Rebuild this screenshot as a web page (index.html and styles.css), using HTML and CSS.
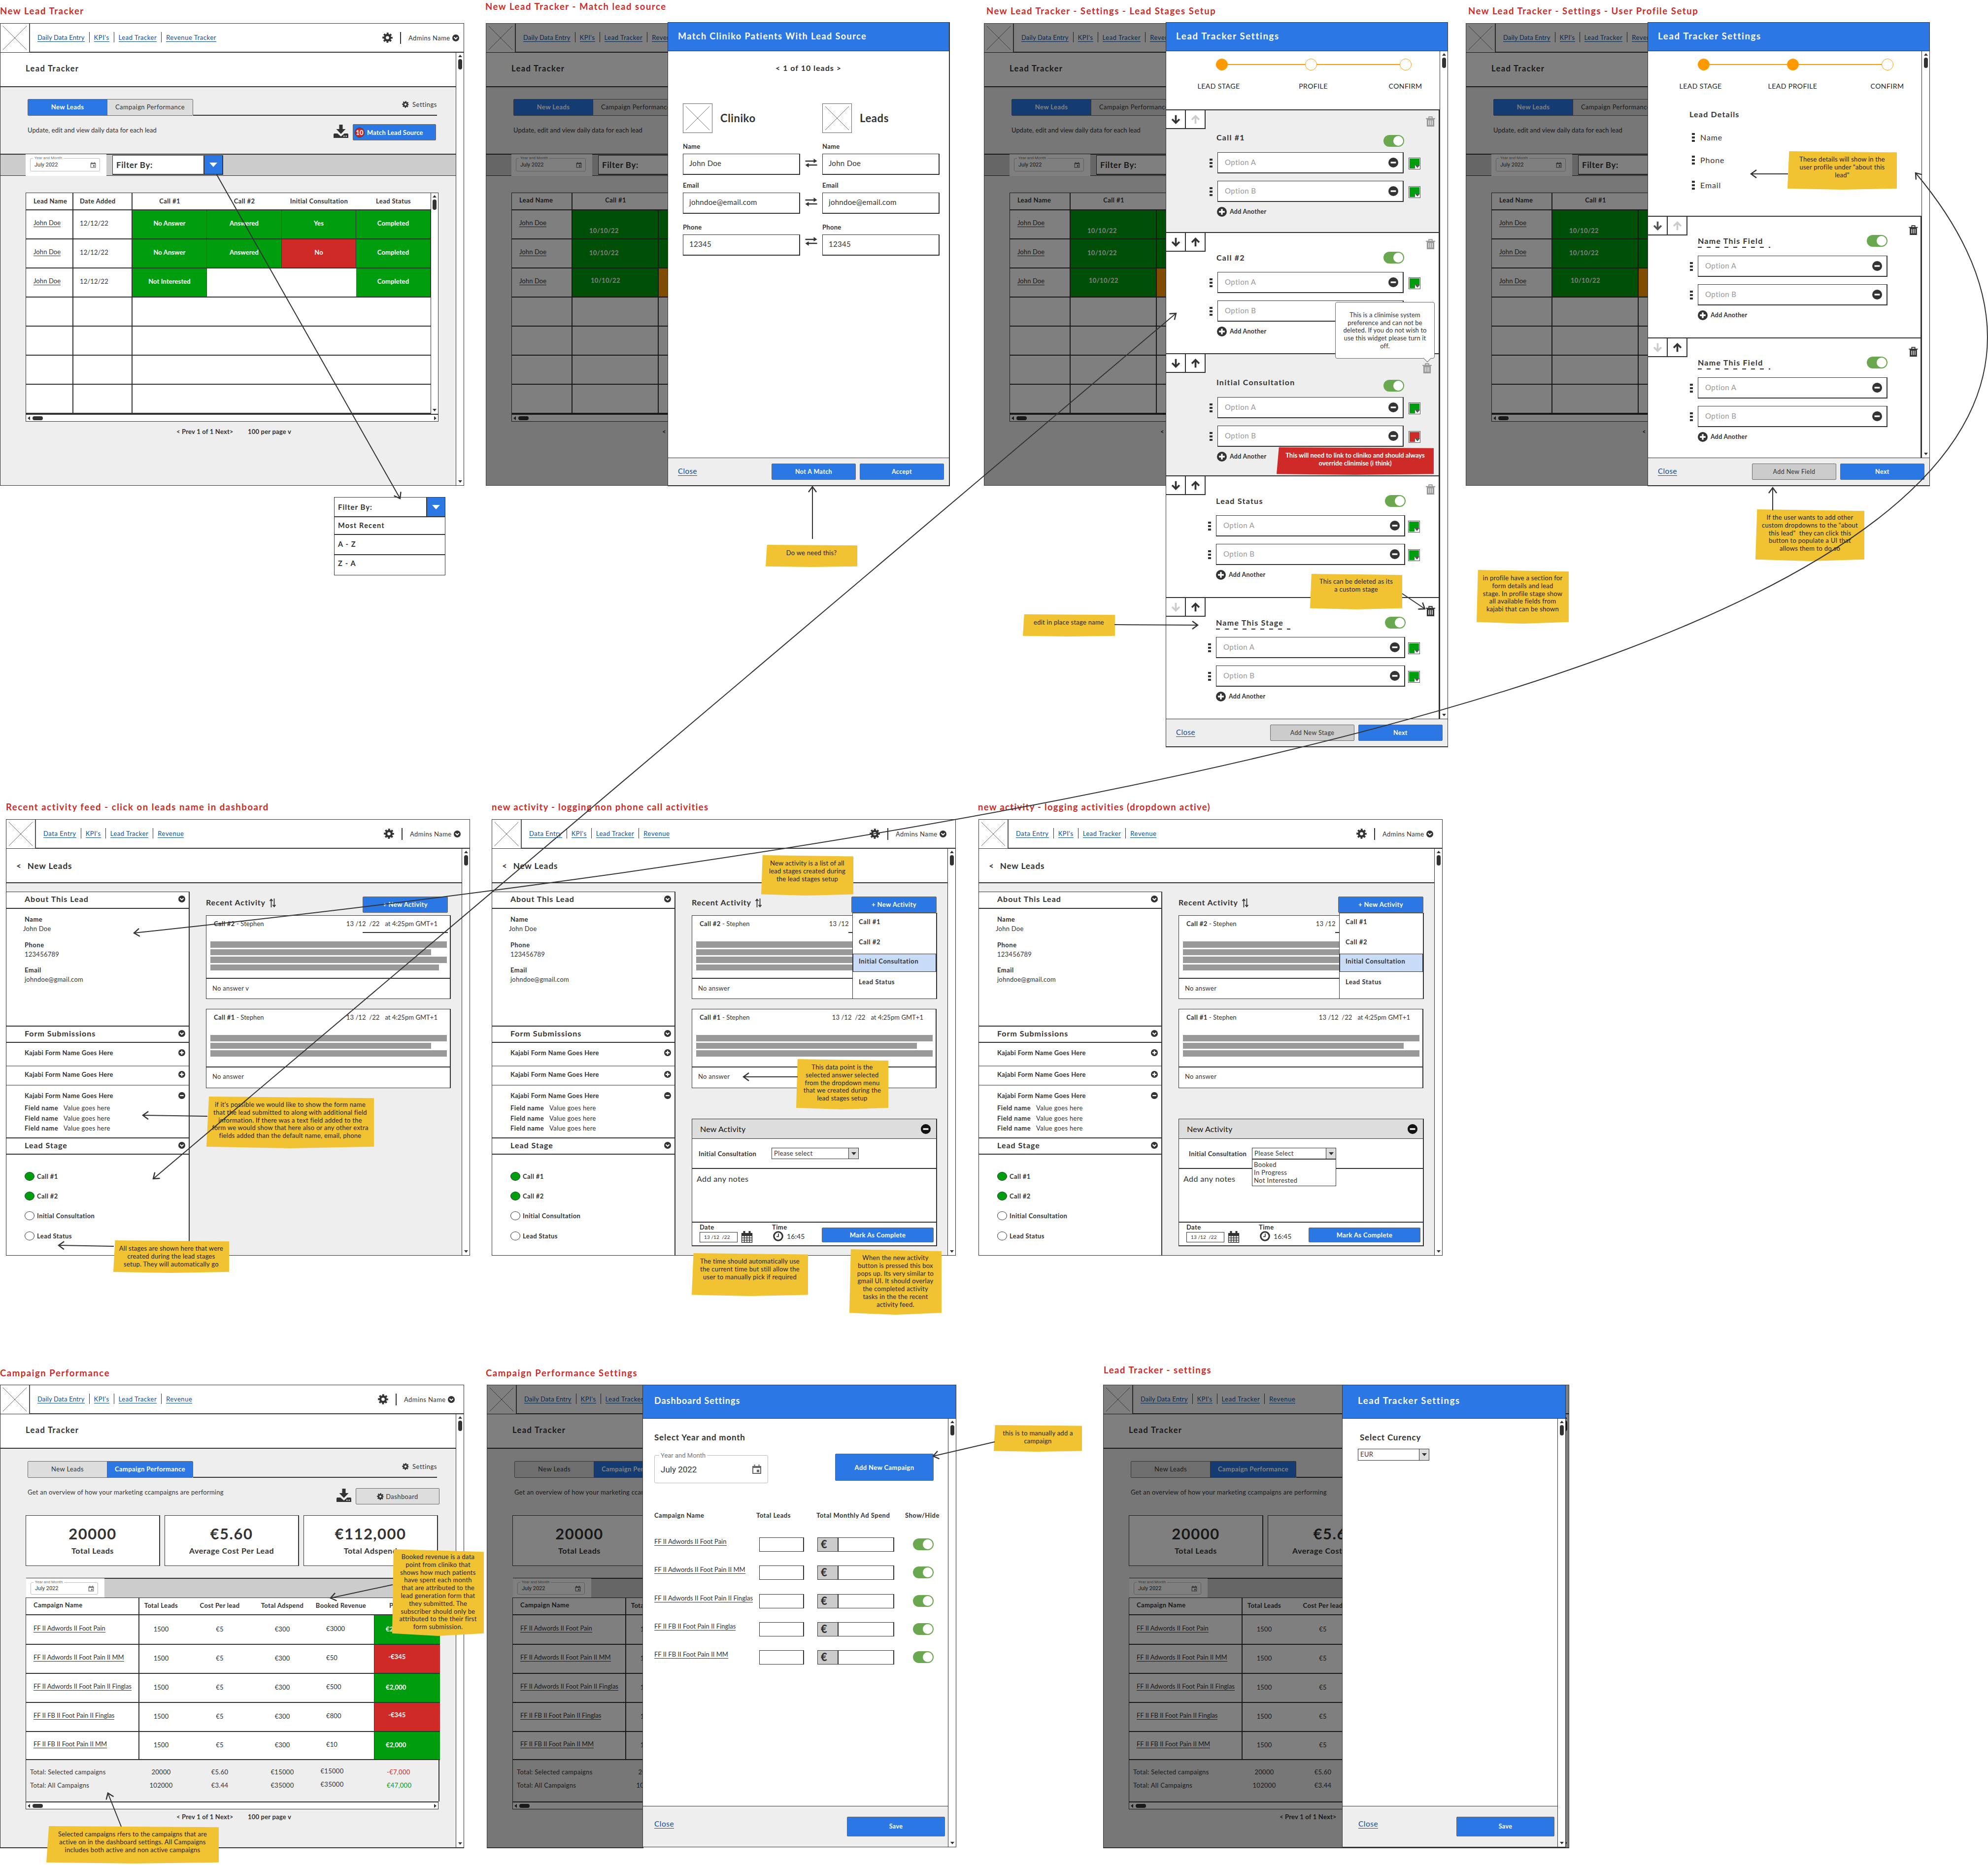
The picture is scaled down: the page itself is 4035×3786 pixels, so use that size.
FILE: index.html
```html
<!DOCTYPE html>
<html lang="en">
<head>
<meta charset="utf-8">
<title>Lead Tracker wireframes</title>
<link rel="stylesheet" href="styles.css">
</head>
<body>
<svg class="defs" aria-hidden="true">
  <symbol id="gear" viewBox="0 0 24 24"><circle cx="12" cy="12" r="6.3" fill="none" stroke="currentColor" stroke-width="5"/><circle cx="12" cy="12" r="9.7" fill="none" stroke="currentColor" stroke-width="4.2" stroke-dasharray="4.2 3.42" stroke-dashoffset="2.1"/></symbol>
  <symbol id="chev" viewBox="0 0 24 24"><circle cx="12" cy="12" r="12" fill="currentColor"/><path d="M6 9.5l6 6 6-6" fill="none" stroke="#fff" stroke-width="3.6"/></symbol>
  <symbol id="plus" viewBox="0 0 24 24"><circle cx="12" cy="12" r="12" fill="currentColor"/><path d="M12 5v14M5 12h14" stroke="#fff" stroke-width="4"/></symbol>
  <symbol id="minus" viewBox="0 0 24 24"><circle cx="12" cy="12" r="12" fill="currentColor"/><path d="M5.5 12h13" stroke="#fff" stroke-width="4"/></symbol>
  <symbol id="trash" viewBox="0 0 20 22"><path d="M6.5 4V1.2h7V4M0 5h20" fill="none" stroke="currentColor" stroke-width="2"/><path d="M2 5h16v17H2z" fill="currentColor"/><path d="M6.2 8.500v10M10 8.500v10M13.800 8.500v10" stroke="#eee" stroke-width="1.600"/></symbol>
  <symbol id="up" viewBox="0 0 24 24"><path d="M12 22V4M3.500 12.500L12 4l8.500 8.500" fill="none" stroke="currentColor" stroke-width="4.200"/></symbol>
  <symbol id="down" viewBox="0 0 24 24"><path d="M12 2v18M3.500 11.500L12 20l8.500-8.500" fill="none" stroke="currentColor" stroke-width="4.200"/></symbol>
  <symbol id="dots" viewBox="0 0 6 20"><path d="M0 1h6v4H0zM0 8h6v4H0zM0 15h6v4H0z" fill="currentColor"/></symbol>
  <symbol id="swap" viewBox="0 0 24 18"><path d="M0 5h20M24 13H4" stroke="currentColor" stroke-width="2.600"/><path d="M17 0l7 5-7 4zM7 9l-7 4 7 5z" fill="currentColor"/></symbol>
  <symbol id="download" viewBox="0 0 30 27"><path d="M11.500 0h7v9h6L15 19 5.500 9h6z" fill="currentColor"/><path d="M1 18h7l7 6 7-6h7l1 2v7H0v-7z" fill="currentColor"/><path d="M20 23.500h2.500M24.500 23.500H27" stroke="#eee" stroke-width="2"/></symbol>
  <symbol id="event" viewBox="0 0 20 20"><path d="M2 4h16v14H2z" fill="none" stroke="currentColor" stroke-width="2"/><path d="M2 3h16v4H2zM4.500 0h2v4h-2zM13.500 0h2v4h-2zM10 10.500h5v5h-5z" fill="currentColor"/></symbol>
  <symbol id="cal" viewBox="0 0 24 24"><path d="M1.500 5h21v18h-21zM1.500 9.500h21M1.500 14h21M1.500 18.500h21M6.700 9v14M12 9v14M17.300 9v14" fill="none" stroke="currentColor" stroke-width="1.400"/><path d="M1 4h22v5H1zM4.500 0h4v6h-4zM15.500 0h4v6h-4z" fill="currentColor"/></symbol>
  <symbol id="clock" viewBox="0 0 24 24"><circle cx="12" cy="12" r="10" fill="none" stroke="currentColor" stroke-width="3.600"/><path d="M12.500 6v7H8" fill="none" stroke="currentColor" stroke-width="2"/></symbol>
  <symbol id="sort" viewBox="0 0 13 18"><path d="M3.500 18V2M0.500 5l3-3.500 3 3.500M9.500 0v16M6.500 13l3 3.500 3-3.500" fill="none" stroke="currentColor" stroke-width="1.800"/></symbol>
  <symbol id="cross" viewBox="0 0 60 60" preserveAspectRatio="none"><path d="M5 5l50 50M55 5L5 55" stroke="#666" stroke-width="1"/></symbol>
</svg>

<template id="date-picker">
  <div class="picker"><div class="picker-box"><span class="picker-label">Year and Month</span><span>July 2022</span><svg class="i12"><use href="#event"/></svg></div></div>
</template>

<template id="user-menu">
  <svg class="i21"><use href="#gear"/></svg><i class="bar"></i><span>Admins Name</span><svg class="i14"><use href="#chev"/></svg>
</template>

<template id="leads-dimmed">
  <header class="top"><div class="logo"><svg><use href="#cross"/></svg></div>
    <nav><a class="daily">Daily Data Entry</a><a>KPI's</a><a>Lead Tracker</a><a>Revenue Tracker</a></nav></header>
  <div class="title-band">Lead Tracker</div>
  <div class="tools"><div class="tabs"><b class="on">New Leads</b><b>Campaign Performance</b></div></div>
  <div class="intro">Update, edit and view daily data for each lead</div>
  <div class="strip"><div data-part="date-picker"></div><div class="filter"><b>Filter By:</b></div></div>
  <div class="leads dim-grid">
    <div class="th name">Lead Name</div><div class="th mid">Call #1</div><div class="th"></div>
    <div class="name"><u>John Doe</u></div><div class="green low">10/10/22</div><div class="green"></div>
    <div class="name"><u>John Doe</u></div><div class="green even">10/10/22</div><div class="green"></div>
    <div class="name"><u>John Doe</u></div><div class="green third">10/10/22</div><div class="orange"></div>
    <div></div><div></div><div></div><div></div><div></div><div></div><div></div><div></div><div></div><div></div><div></div><div></div>
  </div>
  <div class="hscroll"><i></i></div>
  <div class="pager"><span>&lt; Prev 1 of 1 Next&gt;</span></div>
</template>

<template id="campaign">
  <header class="top"><div class="logo"><svg><use href="#cross"/></svg></div>
    <nav><a class="daily">Daily Data Entry</a><a>KPI's</a><a>Lead Tracker</a><a>Revenue</a></nav>
    <div class="user shift" data-part="user-menu"></div></header>
  <div class="pane"><main>
    <div class="title-band">Lead Tracker</div>
    <div class="tools"><div class="tabs"><b>New Leads</b><b class="on">Campaign Performance</b></div><div class="rule"><svg class="i14"><use href="#gear"/></svg><span>Settings</span></div></div>
    <div class="intro with-actions"><span>Get an overview of how your marketing ccampaigns are performing</span>
      <div class="actions"><svg class="dl"><use href="#download"/></svg><div class="btn grey"><svg class="i14"><use href="#gear"/></svg>Dashboard</div></div></div>
    <div class="stats"><div><strong>20000</strong><b>Total Leads</b></div><div><strong>€5.60</strong><b>Average Cost Per Lead</b></div><div><strong>€112,000</strong><b>Total Adspend</b></div></div>
    <div class="strip short"><div data-part="date-picker"></div></div>
    <div class="camp">
      <div class="th nm">Campaign Name</div><div class="th">Total Leads</div><div class="th">Cost Per lead</div><div class="th">Total Adspend</div><div class="th">Booked Revenue</div><div class="th pf">Profit</div>
      <div class="nm"><u>FF II Adwords II Foot Pain</u></div><div>1500</div><div>€5</div><div>€300</div><div class="bk">€3000</div><div class="pf green">€2,000</div>
      <div class="nm"><u>FF II Adwords II Foot Pain II MM</u></div><div>1500</div><div>€5</div><div>€300</div><div class="bk">€50</div><div class="pf red neg">-€345</div>
      <div class="nm"><u>FF II Adwords II Foot Pain II Finglas</u></div><div>1500</div><div>€5</div><div>€300</div><div class="bk">€500</div><div class="pf green">€2,000</div>
      <div class="nm"><u>FF II FB II Foot Pain II Finglas</u></div><div>1500</div><div>€5</div><div>€300</div><div class="bk">€800</div><div class="pf red neg">-€345</div>
      <div class="nm"><u>FF II FB II Foot Pain II MM</u></div><div>1500</div><div>€5</div><div>€300</div><div class="bk">€10</div><div class="pf green">€2,000</div>
    </div>
    <div class="totals">
      <div class="nm">Total: Selected campaigns</div><div>20000</div><div>€5.60</div><div>€15000</div><div>€15000</div><div class="loss">-€7,000</div>
      <div class="nm">Total: All Campaigns</div><div>102000</div><div>€3.44</div><div>€35000</div><div>€35000</div><div class="gain">€47,000</div>
    </div>
    <div class="hscroll"><i></i></div>
    <div class="pager"><span>&lt; Prev 1 of 1 Next&gt;</span><span>100 per page v</span></div>
  </main><aside class="vscroll"><i></i></aside></div>
</template>

<template id="activity">
  <header class="top"><div class="logo"><svg><use href="#cross"/></svg></div>
    <nav><a>Data Entry</a><a>KPI's</a><a>Lead Tracker</a><a>Revenue</a></nav>
    <div class="user shift" data-part="user-menu"></div></header>
  <div class="pane"><main>
    <div class="title-band back"><span>&lt;</span>New Leads</div>
    <div class="cols">
      <div class="lead-panel">
        <h3>About This Lead<svg class="i14"><use href="#chev"/></svg></h3>
        <dl><dt>Name</dt><dd class="first">John Doe</dd><dt>Phone</dt><dd>123456789</dd><dt>Email</dt><dd>johndoe@gmail.com</dd></dl>
        <h3>Form Submissions<svg class="i14"><use href="#chev"/></svg></h3>
        <div class="form-row f1">Kajabi Form Name Goes Here<svg class="i14"><use href="#plus"/></svg></div>
        <div class="form-row f2">Kajabi Form Name Goes Here<svg class="i14"><use href="#plus"/></svg></div>
        <div class="form-row f3">Kajabi Form Name Goes Here<svg class="i14"><use href="#minus"/></svg></div>
        <div class="fields"><p><b>Field name</b>Value goes here</p><p><b>Field name</b>Value goes here</p><p><b>Field name</b>Value goes here</p></div>
        <h3>Lead Stage<svg class="i14"><use href="#chev"/></svg></h3>
        <ul><li class="done">Call #1</li><li class="done">Call #2</li><li>Initial Consultation</li><li>Lead Status</li></ul>
      </div>
      <div class="feed">
        <div class="feed-head"><b>Recent Activity</b><svg class="sort"><use href="#sort"/></svg><div class="btn new">+ New Activity</div></div>
        <article><div class="meta"><span><b>Call #2</b> - Stephen</span><span class="day">13 /12<span class="covered">&nbsp; /22</span></span><span class="covered">at 4:25pm GMT+1</span></div><i class="stub"></i>
          <div class="lines"><i></i><i class="s1"></i><i></i><i class="s2"></i></div><footer>No answer<span class="only-first">&nbsp;v</span></footer></article>
        <article class="second"><div class="meta"><span><b>Call #1</b> - Stephen</span><span class="day">13 /12&nbsp; /22</span><span>at 4:25pm GMT+1</span></div>
          <div class="lines"><i></i><i class="s1"></i><i></i></div><footer>No answer</footer></article>
        <section class="composer">
          <div class="c-head">New Activity<svg class="i20"><use href="#minus"/></svg></div>
          <div class="c-pick"><b>Initial Consultation</b><div class="select"><span></span><i></i></div></div>
          <div class="c-notes">Add any notes</div>
          <div class="c-foot"><div class="c-date"><b>Date</b><div><span class="input">13 /12&nbsp; /22</span><svg class="cal"><use href="#cal"/></svg></div></div>
            <div class="c-time"><b>Time</b><div><svg class="i21"><use href="#clock"/></svg><span>16:45</span></div></div>
            <div class="btn done-btn">Mark As Complete</div></div>
        </section>
      </div>
    </div>
  </main><aside class="vscroll"><i></i></aside></div>
  <div class="menu"><b>Call #1</b><b>Call #2</b><b class="hot">Initial Consultation</b><b class="end">Lead Status</b></div>
</template>

<h2 class="t1">New Lead Tracker</h2>
<h2 class="t2">New Lead Tracker - Match lead source</h2>
<h2 class="t3">New Lead Tracker - Settings - Lead Stages Setup</h2>
<h2 class="t4">New Lead Tracker - Settings - User Profile Setup</h2>
<h2 class="t5">Recent activity feed - click on leads name in dashboard</h2>
<h2 class="t6">new activity - logging non phone call activities</h2>
<h2 class="t7">new activity - logging activities (dropdown active)</h2>
<h2 class="t8">Campaign Performance</h2>
<h2 class="t9">Campaign Performance Settings</h2>
<h2 class="t10">Lead Tracker - settings</h2>

<section class="board b1">
  <header class="top"><div class="logo"><svg><use href="#cross"/></svg></div>
    <nav><a class="daily">Daily Data Entry</a><a>KPI's</a><a>Lead Tracker</a><a>Revenue Tracker</a></nav>
    <div class="user" data-part="user-menu"></div></header>
  <div class="pane"><main>
    <div class="title-band">Lead Tracker</div>
    <div class="tools"><div class="tabs"><b class="on">New Leads</b><b>Campaign Performance</b></div><div class="rule"><svg class="i14"><use href="#gear"/></svg><span>Settings</span></div></div>
    <div class="intro with-actions"><span>Update, edit and view daily data for each lead</span>
      <div class="actions"><svg class="dl"><use href="#download"/></svg><div class="btn match"><em>10</em>Match Lead Source</div></div></div>
    <div class="strip"><div data-part="date-picker"></div><div class="filter"><b>Filter By:</b><i class="tri"></i></div></div>
    <div class="leads-wrap"><div class="leads full">
      <div class="th name">Lead Name</div><div class="th date">Date Added</div><div class="th">Call #1</div><div class="th">Call #2</div><div class="th">Initial Consultation</div><div class="th">Lead Status</div>
      <div class="name"><u>John Doe</u></div><div class="date">12/12/22</div><div class="green">No Answer</div><div class="green">Answered</div><div class="green">Yes</div><div class="green">Completed</div>
      <div class="name"><u>John Doe</u></div><div class="date">12/12/22</div><div class="green">No Answer</div><div class="green">Answered</div><div class="red">No</div><div class="green">Completed</div>
      <div class="name"><u>John Doe</u></div><div class="date">12/12/22</div><div class="green">Not Interested</div><div class="blank"></div><div class="blank"></div><div class="green">Completed</div>
      <div></div><div></div><div class="wide"></div><div></div><div></div><div class="wide"></div><div></div><div></div><div class="wide"></div><div></div><div></div><div class="wide"></div>
    </div><aside class="vscroll"><i></i></aside></div>
    <div class="hscroll"><i></i></div>
    <div class="pager"><span>&lt; Prev 1 of 1 Next&gt;</span><span>100 per page v</span></div>
  </main><aside class="vscroll"><i></i></aside></div>
</section>

<div class="filter-menu"><div class="filter"><b>Filter By:</b><i class="tri"></i></div><b>Most Recent</b><b>A - Z</b><b>Z - A</b></div>

<section class="board dim b2" data-part="leads-dimmed"></section>
<section class="drawer d2">
  <h1>Match Cliniko Patients With Lead Source</h1>
  <div class="match-body">
    <div class="count">&lt; 1 of 10 leads &gt;</div>
    <div class="match-grid">
      <div class="who"><div class="logo"><svg><use href="#cross"/></svg></div>Cliniko</div><span></span><div class="who"><div class="logo"><svg><use href="#cross"/></svg></div>Leads</div>
      <label>Name<span>John Doe</span></label><svg class="swap"><use href="#swap"/></svg><label>Name<span>John Doe</span></label>
      <label class="email">Email<span>johndoe@email.com</span></label><svg class="swap"><use href="#swap"/></svg><label class="email">Email<span>johndoe@email.com</span></label>
      <label>Phone<span>12345</span></label><svg class="swap last"><use href="#swap"/></svg><label>Phone<span>12345</span></label>
    </div>
  </div>
  <footer class="foot"><a>Close</a><div class="btn">Not A Match</div><div class="btn">Accept</div></footer>
</section>

<section class="board dim b3" data-part="leads-dimmed"></section>
<section class="drawer d3">
  <h1>Lead Tracker Settings</h1>
  <div class="pane"><div class="scroll-body">
    <div class="steps"><div class="on"><i></i><span>LEAD STAGE</span></div><div><i></i><span>PROFILE</span></div><div><i></i><span>CONFIRM</span></div></div>
    <div class="stage s1" data-name="Call #1" data-up="off" data-trash="off" data-colors="green green"></div>
    <div class="stage s2" data-name="Call #2" data-trash="off" data-colors="green green"></div>
    <div class="stage s3" data-name="Initial Consultation" data-trash="off" data-colors="green red"></div>
    <div class="stage s4" data-name="Lead Status" data-trash="off" data-colors="green green"></div>
    <div class="stage s5" data-name="Name This Stage" data-down="off" data-edit data-colors="green green"></div>
  </div><aside class="vscroll"><i></i></aside></div>
  <footer class="foot"><a>Close</a><div class="btn grey">Add New Stage</div><div class="btn">Next</div></footer>
</section>
<div class="tooltip">This is a clinimise system<br>preference and can not be<br>deleted. If you do not wish to<br>use this widget please turn it<br>off.</div>

<section class="board dim b4" data-part="leads-dimmed"></section>
<section class="drawer d4">
  <h1>Lead Tracker Settings</h1>
  <div class="pane"><div class="scroll-body">
    <div class="steps"><div class="on"><i></i><span>LEAD STAGE</span></div><div class="on"><i></i><span>LEAD PROFILE</span></div><div><i></i><span>CONFIRM</span></div></div>
    <div class="details"><b>Lead Details</b><p><svg class="dots"><use href="#dots"/></svg>Name</p><p><svg class="dots"><use href="#dots"/></svg>Phone</p><p class="last"><svg class="dots"><use href="#dots"/></svg>Email</p></div>
    <div class="stage p1" data-name="Name This Field" data-down="soft" data-up="off" data-edit></div>
    <div class="stage p2" data-name="Name This Field" data-down="off" data-edit></div>
  </div><aside class="vscroll"><i></i></aside></div>
  <footer class="foot"><a>Close</a><div class="btn grey">Add New Field</div><div class="btn">Next</div></footer>
</section>

<section class="board b5" data-part="activity"></section>
<section class="board b6 composing" data-part="activity" data-select="Please select"></section>
<section class="board b7 composing" data-part="activity" data-select="Please Select"></section>
<div class="options"><span>Booked</span><span>In Progress</span><span>Not Interested</span></div>

<section class="board b8" data-part="campaign"></section>
<section class="board dim b9" data-part="campaign"></section>
<section class="drawer d9">
  <h1>Dashboard Settings</h1>
  <div class="pane"><div class="dash">
    <div class="dash-top"><div><b>Select Year and month</b><div class="picker-box big"><span class="picker-label">Year and Month</span><span>July 2022</span><svg class="i20"><use href="#event"/></svg></div></div><div class="btn add">Add New Campaign</div></div>
    <div class="dash-grid">
      <b>Campaign Name</b><b>Total Leads</b><b>Total Monthly Ad Spend</b><b>Show/Hide</b>
      <u>FF II Adwords II Foot Pain</u><i class="box"></i><div class="money"><span>€</span></div><i class="toggle"></i>
      <u>FF II Adwords II Foot Pain II MM</u><i class="box"></i><div class="money"><span>€</span></div><i class="toggle"></i>
      <u>FF II Adwords II Foot Pain II Finglas</u><i class="box"></i><div class="money"><span>€</span></div><i class="toggle"></i>
      <u>FF II FB II Foot Pain II Finglas</u><i class="box"></i><div class="money"><span>€</span></div><i class="toggle"></i>
      <u>FF II FB II Foot Pain II MM</u><i class="box"></i><div class="money"><span>€</span></div><i class="toggle"></i>
    </div>
    <footer class="foot tall"><a>Close</a><div class="btn">Save</div></footer>
  </div><aside class="vscroll"><i></i></aside></div>
</section>
<section class="board dim b10" data-part="campaign"></section>
<section class="drawer d10">
  <h1>Lead Tracker Settings</h1>
  <div class="pane"><div class="dash">
    <div class="currency"><b>Select Curency</b><div class="select"><span>EUR</span><i></i></div></div>
    <footer class="foot tall"><a>Close</a><div class="btn">Save</div></footer>
  </div><aside class="vscroll"><i></i></aside></div>
</section>

<div class="note n1">Do we need this?</div>
<div class="note n2 danger">This will need to link to cliniko and should always<br>override clinimise (i think)</div>
<div class="note n3">This can be deleted as its<br>a custom stage</div>
<div class="note n4">edit in place stage name</div>
<div class="note n5">These details will show in the<br>user profile under "about this<br>lead"</div>
<div class="note n6">If the user wants to add other<br>custom dropdowns to the "about<br>this lead"&nbsp; they can click this<br>button to populate a UI that<br>allows them to do so</div>
<div class="note n7">in profile have a section for<br>form details and lead<br>stage. In profile stage show<br>all available fields from<br>kajabi that can be shown</div>
<div class="note n8">if it's possible we would like to show the form name<br>that the lead submitted to along with additional field<br>information. If there was a text field added to the<br>form we would show that here also or any other extra<br>fields added than the default name, email, phone</div>
<div class="note n9">All stages are shown here that were<br>created during the lead stages<br>setup. They will automatically go</div>
<div class="note n10">New activity is a list of all<br>lead stages created during<br>the lead stages setup</div>
<div class="note n11">This data point is the<br>selected answer selected<br>from the dropdown menu<br>that we created during the<br>lead stages setup</div>
<div class="note n12">The time should automatically use<br>the current time but still allow the<br>user to manually pick if required</div>
<div class="note n13">When the new activity<br>button is pressed this box<br>pops up. Its very similar to<br>gmail UI. It should overlay<br>the completed activity<br>tasks in the the recent<br>activity feed.</div>
<div class="note n14">Booked revenue is a data<br>point from cliniko that<br>shows how much patients<br>have spent each month<br>that are attributed to the<br>lead generation form that<br>they submitted. The<br>subscriber should only be<br>attributed to the their first<br>form submission.</div>
<div class="note n15">Selected campaigns rfers to the campaigns that are<br>active on in the dashboard settings. All Campaigns<br>includes both active and non active campaigns</div>
<div class="note n16">this is to manually add a<br>campaign</div>

<svg class="arrows" viewBox="0 0 4035 3786" fill="none" stroke="#333" stroke-width="2">
  <defs>
    <marker id="head" markerUnits="userSpaceOnUse" markerWidth="30" markerHeight="30" refX="15" refY="15" viewBox="0 0 30 30" orient="auto"><path d="M4 7L15 15 4 23" fill="none" stroke="#333" stroke-width="2.400"/></marker>
    <marker id="tail" markerUnits="userSpaceOnUse" markerWidth="30" markerHeight="30" refX="15" refY="15" viewBox="0 0 30 30" orient="auto"><path d="M26 7L15 15 26 23" fill="none" stroke="#333" stroke-width="2.400"/></marker>
  </defs>
  <path d="M439 353L812 1012" marker-end="url(#head)"/>
  <path d="M1649 1094V988" marker-end="url(#head)"/>
  <path d="M2262 1268L2431 1269" marker-end="url(#head)"/>
  <path d="M2846 1205L2892 1236" marker-end="url(#head)"/>
  <path d="M3629 353H3554" marker-end="url(#head)"/>
  <path d="M3598 1036V990" marker-end="url(#head)"/>
  <path d="M421 2266L290 2264" marker-end="url(#head)"/>
  <path d="M231 2530L119 2528" marker-end="url(#head)"/>
  <path d="M1619 2186H1509" marker-end="url(#head)"/>
  <path d="M797 3217L671 3244" marker-end="url(#head)"/>
  <path d="M246 3708L219 3640" marker-end="url(#head)"/>
  <path d="M2019 2927L1894 2956" marker-end="url(#head)"/>
  <path d="M311 2393L2387 636" marker-start="url(#tail)" marker-end="url(#head)"/>
  <path d="M272 1894Q4775 1412 3888 351" marker-start="url(#tail)" marker-end="url(#head)"/>
</svg>
<script src="script.js"></script>
</body>
</html>
```
FILE: script.js
```js
// Fill every element that names a part with a copy of that template.
function fill(root) {
  root.querySelectorAll('[data-part]').forEach(function (el) {
    if (!el.dataset.part) return;
    el.prepend(document.getElementById(el.dataset.part).content.cloneNode(true));
    el.removeAttribute('data-part');
    fill(el);
  });
}
fill(document);

document.querySelectorAll('[data-select]').forEach(function (el) {
  el.querySelector('.select span').textContent = el.dataset.select;
});

function icon(name, cls) {
  return '<svg class="' + cls + '"><use href="#' + name + '"/></svg>';
}

// A stage card: order buttons, title with toggle, two options, add link.
document.querySelectorAll('.stage').forEach(function (el) {
  var d = el.dataset;
  var colors = d.colors ? d.colors.split(' ') : [];
  var options = ['Option A', 'Option B'].map(function (label, n) {
    return '<div class="option">' + icon('dots', 'dots') +
      '<div class="field">' + label + icon('minus', 'i20') + '</div>' +
      (colors[n] ? '<i class="swatch ' + colors[n] + '"></i>' : '') + '</div>';
  }).join('');
  el.innerHTML =
    '<div class="order"><span class="' + (d.down || '') + '">' + icon('down', 'i21') + '</span>' +
    '<span class="' + (d.up || '') + '">' + icon('up', 'i21') + '</span>' +
    icon('trash', 'trash ' + (d.trash || '')) + '</div>' +
    '<div class="stage-title"><b' + ('edit' in d ? ' class="edit"' : '') + '>' + d.name + '</b><i class="toggle"></i></div>' +
    options +
    '<div class="another">' + icon('plus', 'i20') + 'Add Another</div>';
});
```
FILE: styles.css
```css
* { box-sizing: border-box; }
body { margin: 0; position: relative; width: 4035px; height: 3786px; overflow: hidden; background: #fff; color: #333; font: 13px/16px Lato, "Liberation Sans", sans-serif; letter-spacing: .1px; white-space: nowrap; }
h1, h2, h3, p, dl, dd, ul { margin: 0; padding: 0; }
svg { display: block; flex: none; }
.defs { position: absolute; width: 0; height: 0; }
.i12 { width: 12px; height: 12px; }
.i14 { width: 14px; height: 14px; }
.i20 { width: 20px; height: 20px; }
.i21 { width: 21px; height: 21px; }
.arrows { position: absolute; left: 0; top: 0; width: 4035px; height: 3786px; }
b, strong { font-weight: 700; letter-spacing: .4px; }
u { text-decoration: none; border-bottom: 1px solid #333; line-height: 15px; }
a { color: #0b4f9e; border-bottom: 1px solid #0b4f9e; line-height: 16px; }

/* canvas placement */
h2 { position: absolute; color: #cf2a27; font: 700 18.500px/24px Lato, sans-serif; letter-spacing: 1.550px; }
.t1 { left: 0; top: 10px; } .t2 { left: 985px; top: 1px; } .t3 { left: 2002px; top: 10px; } .t4 { left: 2980px; top: 10px; }
.t5 { left: 12px; top: 1626px; } .t6 { left: 998px; top: 1626px; } .t7 { left: 1985px; top: 1626px; }
.t8 { left: 0; top: 2775px; } .t9 { left: 986px; top: 2775px; } .t10 { left: 2240px; top: 2769px; }
.t6, .t7 { letter-spacing: 1.300px; }
.board { position: absolute; width: 942px; height: 939px; background: #eee; border: 1px solid #333; overflow: hidden; display: flex; flex-direction: column; }
.b1 { left: 0; top: 47px; } .b2 { left: 986px; top: 47px; width: 372px; } .b3 { left: 1997px; top: 47px; width: 372px; } .b4 { left: 2975px; top: 47px; width: 372px; }
.b5, .b6, .b7 { top: 1663px; height: 886px; } .b5 { left: 12px; } .b6 { left: 998px; } .b7 { left: 1986px; }
.b8, .b9, .b10 { top: 2811px; height: 941px; border-bottom-width: 2px; } .b8 { left: 0; } .b9 { left: 988px; width: 318px; } .b10 { left: 2239px; width: 946px; }
.b9 .pane { width: 940px; }
.dim::after { content: ""; position: absolute; inset: 0; background: rgba(0,0,0,.5); }
.drawer { position: absolute; background: #fff; border: 1px solid #333; display: flex; flex-direction: column; }
.d2 { left: 1355px; top: 45px; width: 573px; height: 942px; border-width: 1px 2px 2px 1px; }
.d3 { left: 2366px; top: 45px; width: 573px; height: 1472px; border-width: 1px 1px 2px 1px; }
.d4 { left: 3344px; top: 45px; width: 573px; height: 942px; border-bottom-width: 2px; }
.d9 { left: 1304px; top: 2811px; width: 637px; height: 939px; }
.d10 { left: 2724px; top: 2811px; width: 454px; height: 939px; }

/* app frame */
.top { height: 59px; flex: none; background: #fff; border-bottom: 2px solid #333; display: flex; align-items: center; }
.logo { width: 60px; height: 58px; flex: none; border: 1px solid #555; border-width: 0 2px 0 0; background: #fff; }
.logo svg { width: 100%; height: 100%; }
nav { display: flex; align-items: center; margin-left: 15px; }
nav a { margin-right: 9px; letter-spacing: .55px; }
nav .daily { letter-spacing: .15px; }
nav a + a { position: relative; margin-left: 10px; }
nav a + a::before { content: ""; position: absolute; left: -10px; top: -3px; height: 21px; border-left: 1px solid #333; }
.user { display: flex; align-items: center; margin-left: auto; padding-right: 9px; }
.user.shift { padding-right: 18px; }
.user .bar { width: 2px; height: 24px; background: #333; margin: 0 15px 0 15px; }
.user span { margin-right: 8px; width: 81px; letter-spacing: .45px; }
.pane { display: flex; flex: 1; min-height: 0; }
main { flex: 1; min-width: 0; display: flex; flex-direction: column; }
.vscroll { width: 16px; flex: none; background: #fff; border-left: 1px solid #333; display: flex; flex-direction: column; align-items: center; justify-content: space-between; }
.vscroll::before { content: ""; border: 4px solid transparent; border-bottom: 5px solid #333; border-top: 0; margin-top: 4px; }
.vscroll::after { content: ""; border: 4px solid transparent; border-top: 5px solid #333; border-bottom: 0; margin-bottom: 5px; }
.vscroll i { width: 8px; height: 21px; border-radius: 4px; background: #333; margin: 4px 0 auto; }
.hscroll { height: 16px; margin-left: 51px; width: 838px; background: #fff; border: 1px solid #333; border-top-width: 2px; display: flex; align-items: center; justify-content: space-between; flex: none; }
.hscroll::before { content: ""; border: 4px solid transparent; border-right: 5px solid #333; border-left: 0; margin-left: 3px; }
.hscroll::after { content: ""; border: 4px solid transparent; border-left: 5px solid #333; border-right: 0; margin-right: 3px; }
.hscroll i { width: 21px; height: 8px; border-radius: 4px; background: #333; margin: 0 auto 0 5px; }
.title-band { height: 70px; flex: none; background: #fff; border-bottom: 2px solid #333; padding: 21px 0 0 51px; font: 700 16.500px/22px Lato, sans-serif; letter-spacing: 1.350px; }
.title-band.back { padding-left: 20px; padding-top: 24px; font-size: 17px; letter-spacing: .9px; }
.title-band.back span { margin-right: 12px; }
.tools { display: flex; margin: 24px 0 0 55px; width: 831px; flex: none; }
.tabs { display: flex; height: 34px; border: 1px solid #666; border-radius: 2px; }
.tabs b { width: 160px; background: #ddd; text-align: center; line-height: 30px; font-weight: 400; letter-spacing: .4px; }
.tabs b + b { width: 174px; border-left: 1px solid #666; }
.tabs .on { background: #2b78e4; color: #fff; font-weight: 700; }
.rule { flex: 1; border-bottom: 2px solid #333; display: flex; justify-content: flex-end; gap: 7px; padding-top: 3px; }
.rule svg { margin-top: 1px; } .rule span { letter-spacing: .5px; }
.intro { margin: 17px 0 0 55px; height: 34px; padding-top: 4px; flex: none; letter-spacing: .08px; }
.with-actions { display: flex; justify-content: space-between; width: 829px; }
.with-actions .actions { display: flex; margin-top: -4px; gap: 9px; }
.b8 .with-actions, .b9 .with-actions, .b10 .with-actions { width: 836px; letter-spacing: .26px; }
.b8 .actions { margin-top: 0; }
.dl { width: 30px; height: 27px; margin-top: 1px; }
.btn { height: 33px; background: #2b78e4; border: 1px solid #666; border-radius: 2px; color: #fff; font-weight: 700; letter-spacing: .4px; display: flex; align-items: center; justify-content: center; }
.btn.grey { background: #ddd; color: #333; font-weight: 400; width: 170px; gap: 4px; }
.btn.match { width: 169px; justify-content: flex-start; padding-left: 3px; gap: 5px; letter-spacing: .2px; }
.match em { width: 20px; height: 20px; border-radius: 50%; background: #cf2a27; border: 1px solid #333; font-style: normal; line-height: 18px; text-align: center; }
.strip { height: 45px; flex: none; margin-top: 26px; padding-left: 51px; background: #ccc; border: 1px solid #333; border-width: 2px 0 1px; display: flex; align-items: center; }
.picker { width: 164px; height: 44px; background: #fff; padding: 8px 0 0 9px; }
.picker-box { position: relative; width: 142px; height: 27px; border: 1px solid #bbb; border-radius: 3px; display: flex; align-items: center; justify-content: space-between; padding: 0 7px 0 8px; font: 11px/14px Roboto, sans-serif; letter-spacing: 0; }
.picker-box svg { color: #666; }
.picker-label { position: absolute; left: 5px; top: -6px; padding: 0 3px; background: #fff; color: #777; font: 8px/10px Roboto, sans-serif; }
.filter { width: 225px; height: 40px; margin-left: 12px; background: #fff; border: 1px solid #333; border-width: 1px 2px 2px 1px; display: flex; align-items: center; justify-content: space-between; padding-left: 7px; }
.filter b { font-size: 17px; letter-spacing: .6px; }
.filter .tri { width: 38px; align-self: stretch; background: #2b78e4; border-left: 2px solid #333; display: flex; align-items: center; justify-content: center; }
.tri::before { content: ""; border: 8px solid transparent; border-top: 9px solid #fff; border-bottom: 0; }

/* leads table */
.leads-wrap { display: flex; margin: 34px 0 0 51px; width: 838px; flex: none; border: 1px solid #333; border-width: 1px 2px 0 1px; background: #fff; }
.leads-wrap .vscroll { width: 15px; margin-left: auto; }
.leads { display: grid; background: #fff; }
.leads > div { border: 0 solid #333; border-width: 0 2px 2px 0; padding-bottom: 5px; display: flex; align-items: center; justify-content: center; }
.full { grid-template: 35px repeat(7, 59px) / 96px 120px 151px 152px 151px 151px; }
.full > .wide { grid-column: 3 / 7; border-right: 0; }
.full > .green, .full > .red { font-weight: 700; color: #fff; border-width: 0 1px 2px 0; letter-spacing: .1px; }
.full > .blank { border-right-width: 0; }
.full > .th { border-right-width: 0; padding-bottom: 2px; }
.full > .name.th, .full > .date.th { border-right-width: 2px; }
.leads > .th { font-weight: 700; letter-spacing: .4px; }
.leads > .name { justify-content: flex-start; padding-left: 15px; }
.leads > .date { justify-content: flex-start; padding-left: 13px; }
.green { background: #009e0f; color: #fff; }
.red { background: #cf2a27; color: #fff; }
.orange { background: #ff9900; }
.dim-grid { margin: 34px 0 0 51px; grid-template: 35px repeat(7, 59px) / 123px 175px 90px; border: 1px solid #333; border-width: 1px 0 0 1px; flex: none; }
.dim-grid > .green { font-weight: 700; justify-content: flex-start; padding-left: 34px; letter-spacing: .3px; color: #fff; }
.dim-grid > .low { align-items: flex-end; padding-bottom: 8px; }
.dim-grid > .even { padding-bottom: 3px; } .dim-grid > .third { padding-left: 37px; padding-bottom: 9px; }
.dim-grid > .th.mid { border-right: 0; }
.pager { display: flex; gap: 28px; margin: 12px 0 0 357px; font-weight: 700; letter-spacing: .2px; }
.pager span { width: 117px; }

.filter-menu { position: absolute; left: 678px; top: 1009px; width: 226px; height: 159px; border: 1px solid #333; background: #fff; display: grid; grid-template-rows: 40px 36px 41px 40px; }
.filter-menu .filter { margin: 0; width: 224px; border-width: 0 0 2px; }
.filter-menu .filter b { font-size: 15px; letter-spacing: 1px; }
.filter-menu > b { padding-left: 7px; font-size: 14.500px; line-height: 34px; letter-spacing: 1.200px; border-bottom: 2px solid #333; }
.filter-menu > b:nth-child(3) { line-height: 38px; }
.filter-menu > b:last-child { border: 0; }

/* drawers */
h1 { height: 58px; flex: none; background: #2b78e4; color: #fff; border-bottom: 1px solid #333; font: 700 18.500px/54px Lato, sans-serif; letter-spacing: 1.700px; padding-left: 20px; }
.d2 h1 { font-size: 18px; letter-spacing: 1.450px; }
.foot { height: 56px; flex: none; background: #eee; border-top: 1px solid #333; padding: 11px 10px 0 20px; display: flex; gap: 8px; }
.foot a { align-self: flex-start; margin: 7px auto 0 0; font-size: 15px; line-height: 17px; letter-spacing: .5px; }
.foot .btn { width: 171px; font-size: 12.500px; }
.foot .grey { background: #ccc; }
.match-body { flex: 1; padding: 23px 0 0 30px; }
.count { width: 510px; text-align: center; font: 700 16px/22px Lato, sans-serif; letter-spacing: 1px; }
.match-grid { margin-top: 60px; display: grid; grid-template-columns: 238px 25px 238px; column-gap: 10px; }
.who { display: flex; align-items: center; gap: 16px; font: 700 22px/26px Lato, sans-serif; letter-spacing: .6px; padding-top: 1px; }
.who .logo { border: 1px solid #666; height: 60px; }
.match-grid label { margin-top: 19px; font-weight: 700; font-size: 13px; letter-spacing: .3px; display: grid; gap: 7px; }
.match-grid .email { margin-top: 13px; }
.match-grid label span { height: 43px; border: 1px solid #333; border-width: 1px 2px 2px 1px; line-height: 37px; padding-left: 12px; font-size: 15px; font-weight: 400; letter-spacing: .3px; }
.swap { width: 25px; height: 18px; align-self: end; margin-bottom: 15px; }
.swap.last { margin-bottom: 20px; }

.scroll-body { flex: 1; min-width: 0; display: flex; flex-direction: column; }
.steps { display: grid; grid-template-columns: 181px 181px 203px; padding: 15px 0 0 22px; height: 118px; flex: none; font-size: 14px; color: #222; margin-right: -24px; }
.steps div { display: grid; justify-items: center; align-content: start; gap: 24px; position: relative; letter-spacing: .45px; }
.steps i { width: 24px; height: 24px; border-radius: 50%; border: 1.500px solid #f90; background: #fff; }
.steps .on i { background: #f90; }
.steps div:first-child span { margin-right: 12px; }
.d3 .steps div:nth-child(2) span { margin-left: 10px; }
.steps div + div::before { content: ""; position: absolute; right: calc(50% + 12px); width: 157px; top: 11px; height: 2px; background: #f90; }
.steps div:last-child::before { width: 168px; }
.stage { border: 2px solid #333; border-width: 2px 2px 0 0; display: flex; flex-direction: column; flex: none; }
.s1 { height: 249px; } .s2 { height: 246px; } .s3 { height: 248px; } .s4 { height: 247px; } .s5 { height: 247px; }
.s1, .s3 { background: #eee; }
.order { display: flex; height: 38px; }
.order span { width: 40px; height: 38px; background: #fff; border: 1px solid #333; border-width: 0 2px 2px 0; display: flex; align-items: center; justify-content: center; }
.order .off { color: #ccc; } .order .soft { color: #555; }
.trash { width: 19px; height: 21px; margin: 12px 7px 0 auto; }
.trash.off { color: #999; }
.s3 .trash { margin: 18px 14px 0 auto; } .s4 .trash, .s5 .trash { margin-top: 16px; }
.stage-title { display: flex; justify-content: space-between; align-items: flex-start; width: 381px; margin-left: 102px; height: 40px; }
.stage-title b { font-size: 16px; line-height: 22px; letter-spacing: 1.250px; }
.stage-title .edit { background: repeating-linear-gradient(90deg, #333 0 8px, transparent 8px 18px) left bottom / 100% 2px no-repeat; padding: 0 14px 3px 0; }
.toggle { width: 42px; height: 24px; border-radius: 12px; background: #6aa84f; padding: 2px; display: flex; justify-content: flex-end; margin-top: -1px; }
.toggle::after { content: ""; width: 20px; height: 20px; border-radius: 50%; background: #fff; }
.s1 .stage-title { margin-top: 13px; height: 34px; } .s2 .stage-title { margin-top: 1px; } .s3 .stage-title { margin-top: 15px; height: 34px; }
.s1 .stage-title b, .s3 .stage-title b { margin-top: -7px; }
.s4 .stage-title, .s5 .stage-title { margin: 1px 0 0 101px; width: 385px; }
.option { display: flex; align-items: center; height: 43px; margin: 0 0 15px 88px; }
.dots { width: 6px; height: 20px; }
.field { width: 378px; height: 43px; margin-left: 10px; background: #fff; border: 1px solid #333; border-width: 1px 2px 2px 1px; display: flex; align-items: center; justify-content: space-between; padding: 0 9px 2px 14px; font-size: 15px; letter-spacing: .5px; color: #999; }
.field svg { color: #333; margin-top: 2px; }
.s4 .field, .s5 .field { width: 384px; } .s4 .option, .s5 .option, .p1 .option, .p2 .option { margin-left: 85px; }
.swatch { width: 24px; height: 24px; flex: none; margin: 2px 0 0 10px; border: 1px solid #555; box-shadow: inset 0 0 0 1px #fff; display: flex; align-items: flex-end; justify-content: flex-end; }
.s4 .swatch, .s5 .swatch { margin-left: 6px; }
.swatch::after { content: ""; width: 0; height: 0; border: 5px solid transparent; border-top-color: #555; border-bottom-width: 2px; border-top-width: 6px; background: #fff; }
.another { display: flex; align-items: center; gap: 6px; margin: -5px 0 0 103px; font-weight: 700; letter-spacing: .3px; font-size: 12.500px; }
.s4 .another, .s5 .another { margin-left: 101px; }
.details { height: 216px; margin-left: 84px; flex: none; display: flex; flex-direction: column; }
.details b { font-size: 16px; line-height: 22px; letter-spacing: 1.200px; margin: -1px 0 25px 0; }
.details p { display: flex; align-items: center; gap: 11px; height: 22px; font-size: 16px; letter-spacing: .9px; margin: 0 0 24px 5px; }
.details .last { margin-top: 5px; }
.p1, .p2 { height: 247px; }
.p1 .stage-title, .p2 .stage-title { margin: 0 0 0 101px; height: 41px; width: 385px; }
.p1 .field, .p2 .field { width: 385px; }
.d4 .another { margin-left: 101px; }
.d4 .trash { margin: 17px 5px 0 auto; height: 20px; }
.tooltip { position: absolute; left: 2710px; top: 613px; width: 202px; height: 115px; border: 1px solid #666; border-radius: 4px; background: #fff; text-align: center; line-height: 15.700px; padding-top: 18px; }
.tooltip::after { content: ""; position: absolute; right: 8px; bottom: -6px; width: 11px; height: 11px; background: #fff; border: 1px solid #666; border-width: 0 1px 1px 0; transform: rotate(45deg); }

/* activity screens */
.cols { display: flex; flex: 1; }
.lead-panel { width: 372px; margin-top: 17px; background: #fff; border: 1px solid #333; border-width: 1px 2px 0 0; display: flex; flex-direction: column; }
.lead-panel h3 { height: 34px; flex: none; border: 0 solid #333; border-bottom-width: 2px; display: flex; align-items: center; justify-content: space-between; padding: 0 7px 4px 37px; font-size: 16px; letter-spacing: 1px; }
.lead-panel dl + h3, .lead-panel .fields + h3 { border-top-width: 2px; height: 35px; }
.lead-panel dl { height: 237px; padding: 12px 0 0 37px; }
dt { font-weight: 700; letter-spacing: .5px; line-height: 18px; } dd { line-height: 18px; margin: 1px 0 14.500px; letter-spacing: .25px; } dd.first { margin-left: -3px; }
.form-row { display: flex; align-items: center; justify-content: space-between; font-weight: 700; letter-spacing: .35px; padding: 0 7px 0 37px; flex: none; }
.f1 { height: 48px; border-bottom: 2px solid #999; padding-bottom: 7px; } .f2 { height: 39px; border-bottom: 2px solid #999; padding-bottom: 5px; } .f3 { height: 34px; padding-top: 6px; }
.fields { height: 71px; padding: 1px 0 0 37px; flex: none; }
.fields p { display: flex; line-height: 20.500px; letter-spacing: .3px; } .fields b { width: 79px; letter-spacing: .5px; }
ul { list-style: none; padding: 34px 0 0 37px; }
li { display: flex; align-items: center; gap: 5px; height: 20px; margin-bottom: 20.200px; font-weight: 700; letter-spacing: .4px; }
li::before { content: ""; width: 18px; height: 16px; flex: none; border: 1px solid #333; border-radius: 50%; }
li.done::before { background: #009e0f; }
.feed { padding-left: 33px; width: 530px; }
.feed-head { display: flex; align-items: center; height: 32px; margin-top: 27px; }
.feed-head b { font-size: 16px; letter-spacing: .85px; padding-bottom: 8px; }
.sort { width: 13px; height: 18px; margin: 0 auto 7px 8px; }
.btn.new { width: 173px; height: 33px; }
.b5 .btn.new { margin-right: 6px; }
article { width: 497px; height: 170px; margin: 6px 0 0 0; background: #fff; border: 1px solid #333; border-width: 1px 2px 1px 1px; display: flex; flex-direction: column; }
.meta { height: 33px; flex: none; display: flex; padding: 8px 25px 0 15px; letter-spacing: .05px; }
.meta .day { margin: 0 11px 0 auto; }
.stub { display: block; align-self: flex-end; width: 173px; margin-right: 4px; height: 2px; background: #333; }
.lines { padding: 17px 0 0 8px; display: grid; gap: 3px; height: 91px; flex: none; align-content: start; }
.lines i { width: 480px; height: 12.600px; background: #999; } .lines .s1 { width: 448px; } .lines .s2 { width: 464px; }
article footer { border-top: 2px solid #333; padding: 11px 0 0 12px; letter-spacing: .3px; }
article.second { height: 161px; margin: 20px 0 0; }
.second .lines { height: 83px; padding-top: 19px; }
.second footer { padding-top: 10px; }
.composer, .menu { display: none; }
.composing .only-first { display: none; }
.composing .covered { visibility: hidden; }
.composing article:not(.second) .day { margin-right: 17px; }
.composing .menu { position: absolute; left: 731px; top: 189px; width: 172px; height: 175px; background: #fff; border: 1px solid #333; border-width: 1px 2px 1px 1px; display: grid; grid-template-rows: 34px 48px 37px 1fr; }
.menu b { padding-left: 12px; align-self: center; letter-spacing: .6px; }
.menu .hot { align-self: stretch; background: #c9dcf7; border: 1px solid #333; line-height: 28px; padding-left: 11px; }
.menu .end { align-self: start; padding-top: 12px; }
.composing .composer { display: flex; flex-direction: column; width: 498px; height: 259px; margin: 62px 0 0 0; background: #fff; border: 1px solid #333; border-width: 1px 2px 2px 1px; }
.c-head { height: 40px; background: #ddd; border-bottom: 1px solid #333; display: flex; align-items: center; justify-content: space-between; padding: 0 11px 0 16px; font-size: 16px; color: #111; letter-spacing: .2px; }
.c-pick { height: 61px; border-bottom: 2px solid #333; display: flex; align-items: center; padding: 0 0 0 13px; }
.c-pick b { width: 148px; letter-spacing: .4px; }
.select { width: 177px; height: 23px; border: 1px solid #333; background: #fff; display: flex; justify-content: space-between; padding-left: 4px; line-height: 20px; letter-spacing: .4px; }
.select i { width: 20px; background: #ddd; border-left: 1px solid #333; display: flex; align-items: center; justify-content: center; }
.select i::before { content: ""; border: 5px solid transparent; border-top: 6px solid #333; border-bottom: 0; }
.b7 .c-pick { padding-left: 20px; } .b7 .c-pick b { width: 128px; } .b7 .select { width: 171px; }
.c-notes { height: 109px; padding: 12px 0 0 9px; font-size: 16px; letter-spacing: .4px; border-bottom: 2px solid #333; }
.c-foot { display: flex; flex: 1; padding: 1px 5px 0 15px; }
.c-date { width: 147px; } .c-date > div, .c-time > div { display: flex; align-items: center; gap: 7px; line-height: 21px; }
.input { width: 77px; height: 21px; border: 1px solid #333; font-size: 10px; line-height: 19px; padding-left: 8px; }
.cal { width: 24px; height: 24px; } .c-time svg { margin-left: 2px; } .c-time span { font-size: 14px; }
.btn.done-btn { width: 227px; height: 30px; margin: 9px 0 0 auto; }
.options { position: absolute; left: 2541px; top: 2353px; width: 171px; height: 55px; border: 1px solid #333; background: #fff; line-height: 16px; padding: 2px 0 0 3px; display: grid; align-content: start; letter-spacing: .4px; }

/* campaign screens */
.b8 .tools, .b9 .tools, .b10 .tools { margin-top: 25px; }
.stats { display: flex; gap: 9px; margin: 25px 0 0 51px; flex: none; }
.stats > div { width: 273px; flex: none; height: 103px; background: #fff; border: 1px solid #333; border-right-width: 2px; display: flex; flex-direction: column; align-items: center; }
.stats strong { font-size: 31px; line-height: 36px; margin-top: 18px; letter-spacing: 1.500px; }
.stats b { font-size: 16px; line-height: 22px; margin-top: 6px; letter-spacing: .6px; }
.strip.short { margin-left: 52px; padding: 0; width: 837px; margin-top: 24px; height: 40px; border-bottom: 0; }
.short .picker { width: 159px; height: 40px; }
.short .picker-box { height: 25px; width: 137px; }
.camp, .totals { display: grid; grid-template-columns: 230px 88px 150px 104px 134px 134px; width: 840px; margin-left: 51px; flex: none; }
.camp { grid-template-rows: 35px 60px 59px 59px 59px 57px; background: #fff; border: 1px solid #333; border-width: 1px 0 0 1px; }
.camp > div { border-bottom: 2px solid #333; display: flex; align-items: center; justify-content: center; padding-bottom: 3px; }
.camp > .nm { justify-content: flex-start; padding-left: 15px; border-right: 2px solid #333; letter-spacing: -.03px; padding-bottom: 5px; }
.camp > .th { font-weight: 700; letter-spacing: .35px; } .camp > .bk { justify-content: flex-start; padding: 0 0 5px 37px; }
.camp > .pf { justify-content: flex-start; padding-left: 23px; font-weight: 700; border-left: 1px solid #333; }
.camp > .th.pf { padding-left: 31px; border-left: 0; } .camp > .neg { padding: 0 0 9px 28px; }
.totals { height: 84px; border: 1px solid #333; border-width: 0 2px 0 1px; grid-template-rows: 27px 27px; padding-top: 11px; text-align: center; line-height: 26px; letter-spacing: .3px; }
.totals .nm { text-align: left; padding-left: 8px; } .totals div:nth-child(6n+5) { padding-right: 36px; margin-top: -2px; }
.loss { color: #cf2a27; } .gain { color: #009e0f; } .totals .loss, .totals .gain { text-align: left; padding-left: 26px; }
.b8 .pager, .b10 .pager { margin-top: 7px; }
/* columns that lie fully behind a drawer */
.dim .user, .dim .rule > *, .dim .actions, .dim .stats > :nth-child(3), .b9 .stats > :nth-child(2), .b9 .pager, .b10 .pager > :nth-child(2), .b9 nav a:nth-child(4),
.dim .camp > :nth-child(6n+4), .dim .camp > :nth-child(6n+5), .dim .camp > :nth-child(6n), .b9 .camp > :nth-child(6n+3),
.dim .totals > :nth-child(6n+4), .dim .totals > :nth-child(6n+5), .dim .totals > :nth-child(6n), .b9 .totals > :nth-child(6n+3) { visibility: hidden; }

.d9 h1, .d10 h1 { height: 68px; line-height: 63px; letter-spacing: 1.600px; padding-left: 23px; }
.d9 h1 { font-size: 18px; letter-spacing: 1px; }
.d10 h1 { padding-left: 31px; }
.dash { flex: 1; display: flex; flex-direction: column; min-width: 0; }
.dash .foot { margin-top: auto; height: 83px; padding: 21px 6px 0 23px; }
.d10 .dash .foot { padding-left: 32px; }
.dash .foot a { margin-top: 6px; font-size: 15.500px; } .dash .foot .btn { width: 199px; height: 40px; }
.dash-top { display: flex; justify-content: space-between; padding: 27px 29px 0 23px; }
.dash-top b, .currency b { display: block; font-size: 17px; line-height: 22px; letter-spacing: .8px; }
.picker-box.big { width: 231px; height: 57px; margin-top: 25px; padding: 0 12px; font-size: 17px; }
.big .picker-label { font-size: 13px; top: -7px; left: 9px; line-height: 14px; }
.btn.add { width: 200px; height: 55px; margin-top: 44px; }
.dash-grid { display: grid; grid-template: 53px repeat(5, 57.300px) / 207px 122px 180px 90px; margin: 57px 0 0 23px; }
.dash-grid > b { letter-spacing: .5px; }
.dash-grid u { justify-self: start; align-self: start; margin-top: 1px; letter-spacing: 0; }
.dash-grid .box { width: 91px; height: 29px; border: 1px solid #333; margin-left: 6px; border-right-width: 2px; }
.money { width: 156px; height: 29px; border: 1px solid #333; margin-left: 2px; display: flex; border-right-width: 2px; }
.money span { width: 42px; background: #ccc; border-right: 2px solid #333; font: 900 22px/26px Lato, sans-serif; padding-left: 6px; }
.dash-grid .toggle { margin: 2px 0 0 16px; }
.currency { padding: 27px 0 0 31px; } .currency .select { width: 145px; height: 24px; margin: 12px 0 0 0; }
.currency b { margin-left: 4px; }

/* sticky notes */
.note { position: absolute; background: #f1c232; clip-path: polygon(1.500% 0, 100% 3%, 100% 97%, 50% 100%, 0 97%); text-align: center; line-height: 15.800px; padding-top: 9px; letter-spacing: .25px; color: #222; }
.danger { background: #cf2a27; color: #fff; font-weight: 700; letter-spacing: 0; }
.n1 { left: 1554px; top: 1106px; width: 186px; height: 45px; }
.n2 { left: 2591px; top: 908px; width: 319px; height: 56px; }
.n3 { left: 2659px; top: 1165px; width: 187px; height: 72px; padding-top: 8px; }
.n4 { left: 2076px; top: 1247px; width: 187px; height: 45px; }
.n5 { left: 3628px; top: 307px; width: 222px; height: 78px; }
.n6 { left: 3563px; top: 1034px; width: 221px; height: 105px; }
.n7 { left: 2997px; top: 1157px; width: 187px; height: 109px; }
.n8 { left: 419px; top: 2226px; width: 340px; height: 105px; }
.n9 { left: 230px; top: 2518px; width: 235px; height: 66px; }
.n10 { left: 1545px; top: 1736px; width: 187px; height: 82px; }
.n11 { left: 1616px; top: 2150px; width: 187px; height: 102px; }
.n12 { left: 1404px; top: 2544px; width: 236px; height: 87px; }
.n13 { left: 1724px; top: 2536px; width: 187px; height: 133px; padding-top: 10px; }
.n14 { left: 796px; top: 3145px; width: 186px; height: 176px; padding-top: 8px; }
.n15 { left: 94px; top: 3707px; width: 350px; height: 76px; }
.n16 { left: 2017px; top: 2893px; width: 179px; height: 54px; }
```
